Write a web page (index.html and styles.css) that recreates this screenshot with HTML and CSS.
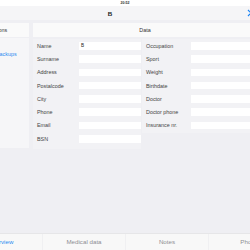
FILE: index.html
```html
<!DOCTYPE html>
<html lang="en">
<head>
    <meta charset="UTF-8">
    <meta name="viewport" content="width=device-width, initial-scale=1.0">
    <title>B</title>
    <link rel="stylesheet" href="styles.css">
</head>
<body>
    <div class="status">20:52</div>

    <header class="navbar">
        <span class="nav-title">B</span>
        <svg class="nav-close" viewBox="0 0 8 8" width="8" height="8">
            <path d="M1 1 L7 7 M7 1 L1 7" stroke="#1a84f5" stroke-width="1.2" fill="none"/>
        </svg>
    </header>

    <div class="split">
        <!-- Linker Bereich -->
        <aside class="sidebar">
            <div class="head-cell">Options</div>
            <ul class="side-list">
                <li class="active">Backups</li>
            </ul>
        </aside>

        <main class="detail">
            <div class="head-cell">Data</div>
            <div class="form">
                <div class="col col-left">
                    <label>Name</label><div class="field">B</div>
                    <label>Surname</label><div class="field"></div>
                    <label>Address</label><div class="field"></div>
                    <label>Postalcode</label><div class="field"></div>
                    <label>City</label><div class="field"></div>
                    <label>Phone</label><div class="field"></div>
                    <label>Email</label><div class="field"></div>
                    <label>BSN</label><div class="field"></div>
                </div>
                <div class="col col-right">
                    <label>Occupation</label><div class="field"></div>
                    <label>Sport</label><div class="field"></div>
                    <label>Weight</label><div class="field"></div>
                    <label>Birthdate</label><div class="field"></div>
                    <label>Doctor</label><div class="field"></div>
                    <label>Doctor phone</label><div class="field"></div>
                    <label>Insurance nr.</label><div class="field"></div>
                </div>
            </div>
        </main>
    </div>

    <nav class="tabbar">
        <div class="tab active">Overview</div>
        <div class="tab">Medical data</div>
        <div class="tab">Notes</div>
        <div class="tab">Photos</div>
    </nav>
</body>
</html>
```

FILE: styles.css
```css
body {
    margin: 0;
    width: 250px;
    height: 250px;
    overflow: hidden;
    background: #efeff3;
    color: #3a3a3a;
    font-family: 'Liberation Sans', Arial, sans-serif;
    font-size: 5.4px;
    display: flex;
    flex-direction: column;
}
.status {
    height: 6px;
    line-height: 6px;
    background: #fff;
    text-align: center;
    font-size: 3.6px;
    font-weight: bold;
    color: #333;
}
.navbar {
    height: 14px;
    background: #f5f5f7;
    display: flex;
    align-items: center;
    justify-content: center;
    position: relative;
    overflow: hidden;
}
.nav-title {
    font-weight: bold;
    font-size: 6.2px;
    color: #222;
    margin-right: 30px;
}
.nav-close {
    position: absolute;
    right: -5px;
    top: 3px;
}
.split {
    flex: 1;
    display: flex;
    flex-direction: row;
    gap: 4px;
    padding-top: 3px;
    min-height: 0;
}
.head-cell {
    height: 14px;
    line-height: 14px;
    background: #fafafa;
    text-align: center;
    color: #333;
}
.sidebar {
    width: 62px;
    margin-left: -33px;
    flex-shrink: 0;
    display: flex;
    flex-direction: column;
}
.side-list {
    list-style: none;
    margin: 1px 0 0 0;
    padding: 13px 0 0 29px;
    height: 97px;
    background: #f6f6f8;
}
.side-list li.active {
    color: #2b8cf0;
}
.detail {
    width: 224px;
    flex-shrink: 0;
    display: flex;
    flex-direction: column;
}
.form {
    display: flex;
    flex-direction: row;
    align-items: flex-start;
    padding-top: 2px;
    gap: 1px;
}
.col {
    display: grid;
    grid-auto-rows: 7.6px;
    row-gap: 5.7px;
    align-items: center;
    background: #f2f2f5;
    padding: 3px 0 6px 4px;
}
.col-left {
    width: 104px;
    grid-template-columns: 42px 62px;
}
.col-right {
    width: 108px;
    grid-template-columns: 45px 63px;
    padding-bottom: 4px;
}
.col label {
    color: #444;
    white-space: nowrap;
}
.field {
    height: 7.6px;
    line-height: 7.6px;
    background: #fff;
    padding-left: 2px;
    color: #222;
    font-size: 4.6px;
    box-sizing: border-box;
}
.tabbar {
    height: 16px;
    background: #f8f8f8;
    border-top: 1px solid #e6e6e8;
    display: grid;
    grid-template-columns: repeat(4, 83px);
    margin-left: -41px;
    width: 332px;
}
.tab {
    text-align: center;
    line-height: 15px;
    font-size: 6.2px;
    color: #8e8e93;
    border-left: 1px solid #f0f0f2;
}
.tab:first-child {
    border-left: none;
}
.tab.active {
    color: #2b8cf0;
}
```
